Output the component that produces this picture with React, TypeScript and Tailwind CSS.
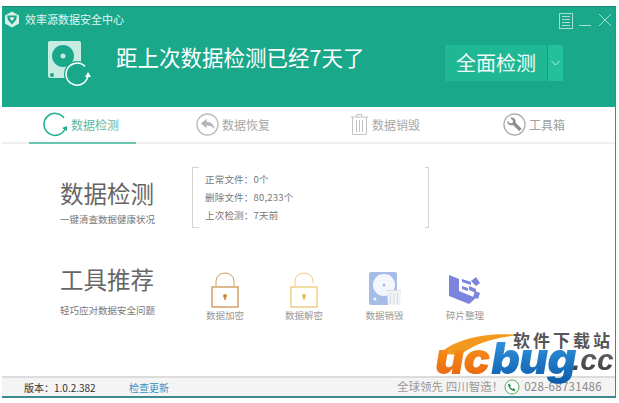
const font = { fontFamily: '"Noto Sans CJK SC", "Liberation Sans", sans-serif' };

const HeaderDisk = () => (
  <svg width="46" height="46" viewBox="0 0 46 46" className="shrink-0">
    <rect x="2" y="0" width="33" height="37" rx="2" fill="#c8ebe2" />
    <circle cx="17" cy="15" r="11" fill="#1aa88a" />
    <circle cx="17" cy="15" r="2.500" fill="#c8ebe2" />
    <circle cx="6" cy="34" r="2" fill="#1aa88a" />
    <circle cx="31" cy="33" r="13" fill="#1aa88a" />
    <path d="M39 25.500A11 11 0 1 0 42 34" fill="none" stroke="#fff" strokeWidth="1.5" />
    <path d="M39 36h6l-3-5z" fill="#fff" />
  </svg>
);

const Logo = () => (
  <svg width="16" height="17" viewBox="0 0 16 17" className="shrink-0">
    <path d="M8 0.500l7 4v8l-7 4-7-4v-8z" fill="#d8f0ea" />
    <path d="M3 4.500h10l-1 4.500-4 4.500-4-4.500z" fill="#1aa88a" />
    <path d="M5.500 6.500h5L8 10z" fill="#fff" />
  </svg>
);

const CheckIcon = () => (
  <svg width="25" height="25" viewBox="0 0 25 25">
    <path d="M22 17a11 11 0 1 1-1-11" fill="none" stroke="#1fae90" strokeWidth="1.5" />
    <path d="M19 16l5-2 0 5z" fill="#1fae90" />
  </svg>
);

const RestoreIcon = () => (
  <svg width="23" height="23" viewBox="0 0 24 24">
    <circle cx="12" cy="12" r="11" fill="none" stroke="#bdbdbd" strokeWidth="1.4" />
    <path d="M5 11l6-5v3c5 0 8 3 8 8-2-3-4-4-8-4v3z" fill="#b5b5b5" />
  </svg>
);

const TrashIcon = () => (
  <svg width="19" height="23" viewBox="0 0 19 23" fill="none" stroke="#c2c2c2" strokeWidth="1">
    <path d="M1 4h17M7 4V1.500h5V4M2.500 4v17.500h14V4" />
    <path d="M6.500 7v12M9.500 7v12M12.500 7v12" />
  </svg>
);

const ToolIcon = () => (
  <svg width="23" height="23" viewBox="0 0 24 24">
    <circle cx="12" cy="12" r="11" fill="none" stroke="#b0b0b0" strokeWidth="1.4" />
    <path d="M4.500 8l3 3 2.500-.5.500-2.500-3-3c3.500-1 6.500 1.500 5.500 5l6.500 6.500-2.500 2.500-6.500-6.500c-3.500 1-6.500-1-6-4.500z" fill="#8f8f8f" />
  </svg>
);

const Lock = ({ color, open, dot }: { color: string; open?: boolean; dot: string }) => (
  <svg width="28" height="36" viewBox="0 0 28 36" fill="none" stroke={color}>
    <path d={open ? "M5 14V9a9 8 0 0 1 18 0v2" : "M5 14V9a9 8 0 0 1 18 0v5"} strokeWidth="1" />
    <rect x="1" y="15" width="26" height="20" strokeWidth="1.4" />
    <circle cx="14" cy="24" r="2" fill={dot} stroke="none" />
    <path d="M14 24v4" stroke={dot} strokeWidth="1.600" />
  </svg>
);

const WipeDisk = () => (
  <svg width="32" height="36" viewBox="0 0 32 36">
    <rect x="0" y="0" width="28" height="33" rx="2" fill="#a6bde8" />
    <circle cx="15" cy="13" r="11" fill="#f3f6fc" />
    <circle cx="15" cy="13" r="1.500" fill="#a6bde8" />
    <circle cx="6" cy="27" r="1.500" fill="#f3f6fc" />
    <path d="M18 19h14l-1 14H19z" fill="#f0f2f6" />
    <path d="M17 18.500h15" stroke="#d8dde6" />
    <path d="M21.500 21v11M25 21v11M28.500 21v11" stroke="#d5dae4" />
  </svg>
);

const DefragIcon = () => (
  <svg width="32" height="32" viewBox="0 0 32 32" fill="#7b85e0">
    <path d="M0 1l10 4v12l17 7-7 6-20-8z" />
    <path d="M13 5l9 3v3l-9-3zM13 12l6 2v3l-6-2zM20 12l7 3v4l-7-3z" />
    <path d="M27 3l4 6-4 3-5-5zM26 17l5 2-2 6-5-2z" />
  </svg>
);

const tabs = [
  { label: "数据检测", icon: <CheckIcon />, color: "text-[#5fb8a4]", cls: "ml-[41px] w-[153px]" },
  { label: "数据恢复", icon: <RestoreIcon />, color: "text-[#a8a8a8]", cls: "w-[154px]" },
  { label: "数据销毁", icon: <TrashIcon />, color: "text-[#a8a8a8]", cls: "w-[153px]" },
  { label: "工具箱", icon: <ToolIcon />, color: "text-[#a0a0a0]", cls: "" },
];

const tools = [
  { label: "数据加密", icon: <Lock color="#d29a5c" dot="#c98a3e" />, w: "w-[78px]" },
  { label: "数据解密", icon: <Lock color="#efcb7c" dot="#e8b94e" open />, w: "w-[80px]" },
  { label: "数据销毁", icon: <WipeDisk />, w: "w-[81px]" },
  { label: "碎片整理", icon: <DefragIcon />, w: "w-[80px]" },
];

export default function App() {
  return (
    <div className="relative h-[403px] w-[619px] overflow-hidden bg-white pb-[5px] pl-[2px] pr-[3px] pt-[6px]" style={font}>
      <div className="flex h-full flex-col border-r border-[#3d8a90]">
        {/* header */}
        <div className="h-[101px] shrink-0 border-t border-[#158a78] bg-[#1aa88a]">
          <div className="flex h-[23px] items-center pl-[2px] pr-[3px] pt-[1px] text-white">
            <Logo />
            <span className="ml-[5px] text-[11px] text-[#e4f5f0]">效率源数据安全中心</span>
            <div className="ml-auto flex items-center gap-[6px] text-[#a8ddd0]">
              <svg width="14" height="16" viewBox="0 0 14 16" fill="none" stroke="currentColor" className="mt-[3px]">
                <rect x="0.500" y="0.500" width="13" height="15" />
                <path d="M3 3.500h8M3 6.500h8M3 9.500h8M3 12.500h8" />
              </svg>
              <svg width="12" height="13" viewBox="0 0 12 13" stroke="currentColor" className="mt-[3px]">
                <path d="M0 11.500h12" />
              </svg>
              <svg width="14" height="14" viewBox="0 0 14 14" stroke="currentColor" className="ml-[1px] mt-[1px]">
                <path d="M1 1l12 12M13 1L1 13" />
              </svg>
            </div>
          </div>
          <div className="flex items-start pl-[44px]">
            <div className="mt-[11px]">
              <HeaderDisk />
            </div>
            <div className="ml-[24px] mt-[12px] text-[21.5px] leading-[30px] text-white">距上次数据检测已经7天了</div>
            <div className="ml-auto mr-[52px] mt-[15px] flex h-[36px] bg-[#20b894]">
              <div className="flex w-[102px] items-center justify-center text-[20px] text-[#f1fbf8]">全面检测</div>
              <div className="flex w-[16px] items-center justify-center border-l border-[#159c80] bg-[#24c09c] text-[#b5ecdf]">
                <svg width="9" height="6" viewBox="0 0 9 6" fill="none" stroke="currentColor">
                  <path d="M0.500 1l4 4 4-4" />
                </svg>
              </div>
            </div>
          </div>
        </div>

        {/* tabs */}
        <div className="relative flex h-[37px] shrink-0 items-center border-b-2 border-[#efefef]">
          {tabs.map((t) => (
            <div key={t.label} className={`flex items-center gap-[3px] ${t.cls}`}>
              {t.icon}
              <span className={`text-[12px] ${t.color}`}>{t.label}</span>
            </div>
          ))}
          <div className="absolute bottom-[-2px] left-[27px] h-[2px] w-[107px] bg-[#6cc5b1]" />
        </div>

        {/* content */}
        <div className="flex flex-1 flex-col pl-[58px]">
          <div className="mt-[23px] flex h-[61px]">
            <div className="mt-[12px] w-[132px]">
              <div className="text-[23.5px] leading-[28px] text-[#666]">数据检测</div>
              <div className="mt-[5px] text-[9.5px] leading-[14px] text-[#777]">一键清查数据健康状况</div>
            </div>
            <div className="relative flex w-[237px] flex-col gap-[5px] pl-[13px] pt-[6px] text-[9.5px] leading-[13px] tracking-[0.2px] text-[#777]">
              <div>正常文件：0个</div>
              <div>删除文件：80,233个</div>
              <div>上次检测：7天前</div>
              <div className="absolute inset-y-0 left-0 w-[7px] border-y border-l border-[#d4d4d4]" />
              <div className="absolute inset-y-0 right-0 w-[4px] border-y border-r border-[#d4d4d4]" />
            </div>
          </div>

          <div className="mt-[37px] flex">
            <div className="w-[126px]">
              <div className="text-[23.5px] leading-[28px] text-[#666]">工具推荐</div>
              <div className="mt-[10px] text-[9.5px] leading-[14px] text-[#777]">轻巧应对数据安全问题</div>
            </div>
            {tools.map((t) => (
              <div key={t.label} className={`flex flex-col items-center pt-[7px] ${t.w}`}>
                <div className="flex h-[36px] items-center">{t.icon}</div>
                <div className="text-[9.5px] leading-[14px] text-[#999]">{t.label}</div>
              </div>
            ))}
          </div>
        </div>

        {/* footer */}
        <div className="flex h-[22px] shrink-0 items-center border-b-2 border-t-2 border-b-[#3d8a90] border-t-[#dcdcdc] bg-[#f4f4f4] pl-[22px] text-[10px]">
          <span className="w-[105px] text-[#333]">版本：1.0.2.382</span>
          <span className="text-[#3d8fc4]">检查更新</span>
          <span className="ml-auto text-[11.5px] text-[#999]">全球领先 四川智造！</span>
          <svg width="16" height="16" viewBox="0 0 16 16" className="ml-[1px]">
            <circle cx="8" cy="8" r="7" fill="#fff" stroke="#5aa860" />
            <path d="M5 4.500l2 2-1 1c.5 1 1.500 2 2.500 2.500l1-1 2 2-1 1c-3 0-6.500-3.500-6.500-6.500z" fill="#2f8f4a" />
          </svg>
          <span className="ml-[4px] mr-[13px] text-[11.5px] tracking-[0.3px] text-[#888]">028-68731486</span>
        </div>
      </div>

      {/* watermark */}
      <div className="absolute left-[430px] top-[328px] h-[56px] w-[186px]">
        <svg width="90" height="30" viewBox="0 0 90 30" className="absolute left-[6px] top-[3px]">
          <path d="M2 24C18 8 50 1 84 4 62 6 40 11 24 24 16 23 8 23 2 24z" fill="#f39a1e" />
        </svg>
        <div className="absolute left-[83px] top-[2px] whitespace-nowrap text-[17px] font-bold leading-[20px] tracking-[3px] text-[#555]">软件下载站</div>
        <div className="absolute left-[5px] top-[3px] flex origin-left scale-x-[1.02] italic" style={{ fontFamily: 'Inter, "Liberation Sans", sans-serif' }}>
          <span className="bg-gradient-to-b from-[#f9a01c] to-[#e85d10] bg-clip-text pr-[2px] text-[44px] font-black leading-[54px] tracking-[-1px] text-transparent">uc</span>
          <span className="bg-gradient-to-b from-[#3aa0e8] to-[#0a5aa8] bg-clip-text pr-[2px] text-[44px] font-black leading-[54px] tracking-[-1px] text-transparent">bug</span>
        </div>
        <div className="absolute left-[142px] top-[14px] bg-gradient-to-b from-[#777] to-[#333] bg-clip-text pr-[2px] text-[30px] font-bold italic leading-[36px] text-transparent" style={{ fontFamily: '"Liberation Sans", sans-serif' }}>.cc</div>
      </div>
    </div>
  );
}
